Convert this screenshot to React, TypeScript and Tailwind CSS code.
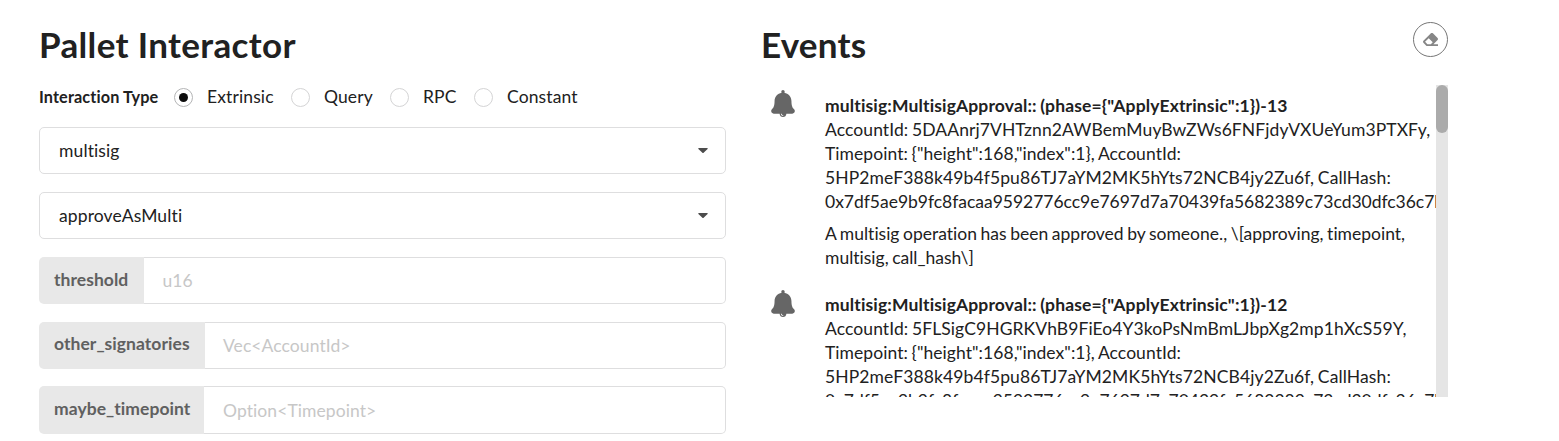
import { FaEraser } from "react-icons/fa";

const interactionTypes = ["Extrinsic", "Query", "RPC", "Constant"];
const radioWidths = ["w-[117px]", "w-[99px]", "w-[84px]", "w-[110px]"];

const params = [
  { name: "threshold", type: "u16", label: "w-[105px] pt-[11px]", row: "mt-[18px] h-[47px]", field: "pl-[18.5px]" },
  { name: "other_signatories", type: "Vec<AccountId>", label: "w-[166px] pt-[10px]", row: "mt-[18px] h-[47px]", field: "pl-[18px]" },
  { name: "maybe_timepoint", type: "Option<Timepoint>", label: "w-[165px] pt-[11px]", row: "mt-[17px] h-[48px]", field: "pl-[19px] pt-px" },
];

const callHash = "0x7df5ae9b9fc8facaa9592776cc9e7697d7a70439fa5682389c73cd30dfc36c7b";

const events = [
  { id: 13, account: "5DAAnrj7VHTznn2AWBemMuyBwZWs6FNFjdyVXUeYum3PTXFy", icon: "pt-[5px]" },
  { id: 12, account: "5FLSigC9HGRKVhB9FiEo4Y3koPsNmBmLJbpXg2mp1hXcS59Y", icon: "pt-[6px]" },
];

function BellIcon() {
  return (
    <svg viewBox="0 0 448 512" className="block h-[27px] w-6 fill-[#666666]">
      <path d="M433.884 366.059C411.634 343.809 384 316.118 384 208c0-79.394-57.831-145.269-133.663-157.83A31.845 31.845 0 0 0 256 32c0-17.673-14.327-32-32-32s-32 14.327-32 32c0 6.75 2.095 13.008 5.663 18.17C121.831 62.731 64 128.606 64 208c0 108.118-27.643 135.809-49.893 158.059C-16.042 396.208 5.325 448 48.048 448H160c0 35.346 28.654 64 64 64s64-28.654 64-64h111.943c42.638 0 64.151-51.731 33.941-81.941zM224 472a8 8 0 0 1 0 16c-22.056 0-40-17.944-40-40h16c0 13.234 10.766 24 24 24z" />
    </svg>
  );
}

function Dropdown({ value }: { value: string }) {
  return (
    <div className="flex h-[47px] items-center justify-between rounded-[5px] border border-[#dededf] pr-[17px] pl-[19px]">
      <span className="tracking-[0.12px]">{value}</span>
      <svg viewBox="0 0 10 5" className="h-[5px] w-[10px] fill-[#4c4c4c]">
        <path d="M0.8 0h8.4c.5 0 .7.5.4.9L5.6 4.7a.8.8 0 0 1-1.2 0L.4.9C.1.5.3 0 .8 0z" />
      </svg>
    </div>
  );
}

export default function App() {
  return (
    <div className="flex h-[441px] overflow-hidden bg-white pl-[39px] font-['Lato',sans-serif] text-[17.5px] leading-6 text-[#212121] [font-variant-ligatures:none]">
      <main className="w-[687px] shrink-0">
        <h1 className="mt-[22px] h-[45px] text-[35px] leading-[45px] font-bold tracking-[0.34px]">Pallet Interactor</h1>
        <div className="mt-[18px] mb-[18px] flex h-6 items-center">
          <span className="w-[135px] text-[16.25px] font-bold tracking-[0.12px]">Interaction Type</span>
          {interactionTypes.map((t, i) => (
            <label key={t} className={`flex items-center gap-[14px] ${radioWidths[i]}`}>
              <span
                className={`flex size-[19px] shrink-0 items-center justify-center rounded-full border ${
                  i === 0 ? "border-[#b4b5b6]" : "border-[#d4d4d5]"
                }`}
              >
                {i === 0 && <span className="size-[9px] rounded-full bg-[#0d0d0d]" />}
              </span>
              <span className="tracking-[0.12px]">{t}</span>
            </label>
          ))}
        </div>
        <Dropdown value="multisig" />
        <div className="h-[18px]" />
        <Dropdown value="approveAsMulti" />
        {params.map((p) => (
          <div key={p.name} className={`flex ${p.row}`}>
            <div className={`shrink-0 rounded-l-[5px] bg-[#e8e8e8] pl-[15px] font-bold tracking-[0.05px] text-[#606060] ${p.label}`}>
              {p.name}
            </div>
            <div className={`flex flex-1 items-center rounded-r-[5px] border border-l-0 border-[#dededf] tracking-[0.08px] text-[#c7c7c7] ${p.field}`}>
              {p.type}
            </div>
          </div>
        ))}
      </main>

      <section className="ml-[35px] w-[687px] shrink-0">
        <header className="mt-[22px] flex h-[45px] justify-between">
          <h1 className="text-[35px] leading-[45px] font-bold tracking-[0.2px]">Events</h1>
          <button className="flex size-[35px] items-center justify-center rounded-full border border-[#767676]">
            <FaEraser className="size-[15px] text-[#868686]" />
          </button>
        </header>
        <div className="mt-[18px] flex h-[312px] overflow-hidden">
          <div className="w-[675px] shrink-0 overflow-hidden">
            {events.map((e) => (
              <article key={e.id} className="flex h-[199px]">
                <div className={`w-[64px] shrink-0 pl-[10px] ${e.icon}`}>
                  <BellIcon />
                </div>
                <div className="w-[611px] pt-[9px] whitespace-nowrap [word-spacing:-0.9px]">
                  <div className="font-bold tracking-[0.14px]">{`multisig:MultisigApproval:: (phase={"ApplyExtrinsic":1})-${e.id}`}</div>
                  <div className="tracking-[0.09px]">AccountId: {e.account},</div>
                  <div className="tracking-[0.06px]">{'Timepoint: {"height":168,"index":1}, AccountId:'}</div>
                  <div className="tracking-[0.11px]">5HP2meF388k49b4f5pu86TJ7aYM2MK5hYts72NCB4jy2Zu6f, CallHash:</div>
                  <div className="tracking-[-0.02px]">{callHash}</div>
                  <div className="mt-2">
                    {"A multisig operation has been approved by someone., \\[approving, timepoint,"}
                    <br />
                    {"multisig, call_hash\\]"}
                  </div>
                </div>
              </article>
            ))}
          </div>
          <div className="w-3 shrink-0 bg-[#e5e5e5]">
            <div className="h-12 rounded-[6px] bg-[#ababab]" />
          </div>
        </div>
      </section>
    </div>
  );
}
